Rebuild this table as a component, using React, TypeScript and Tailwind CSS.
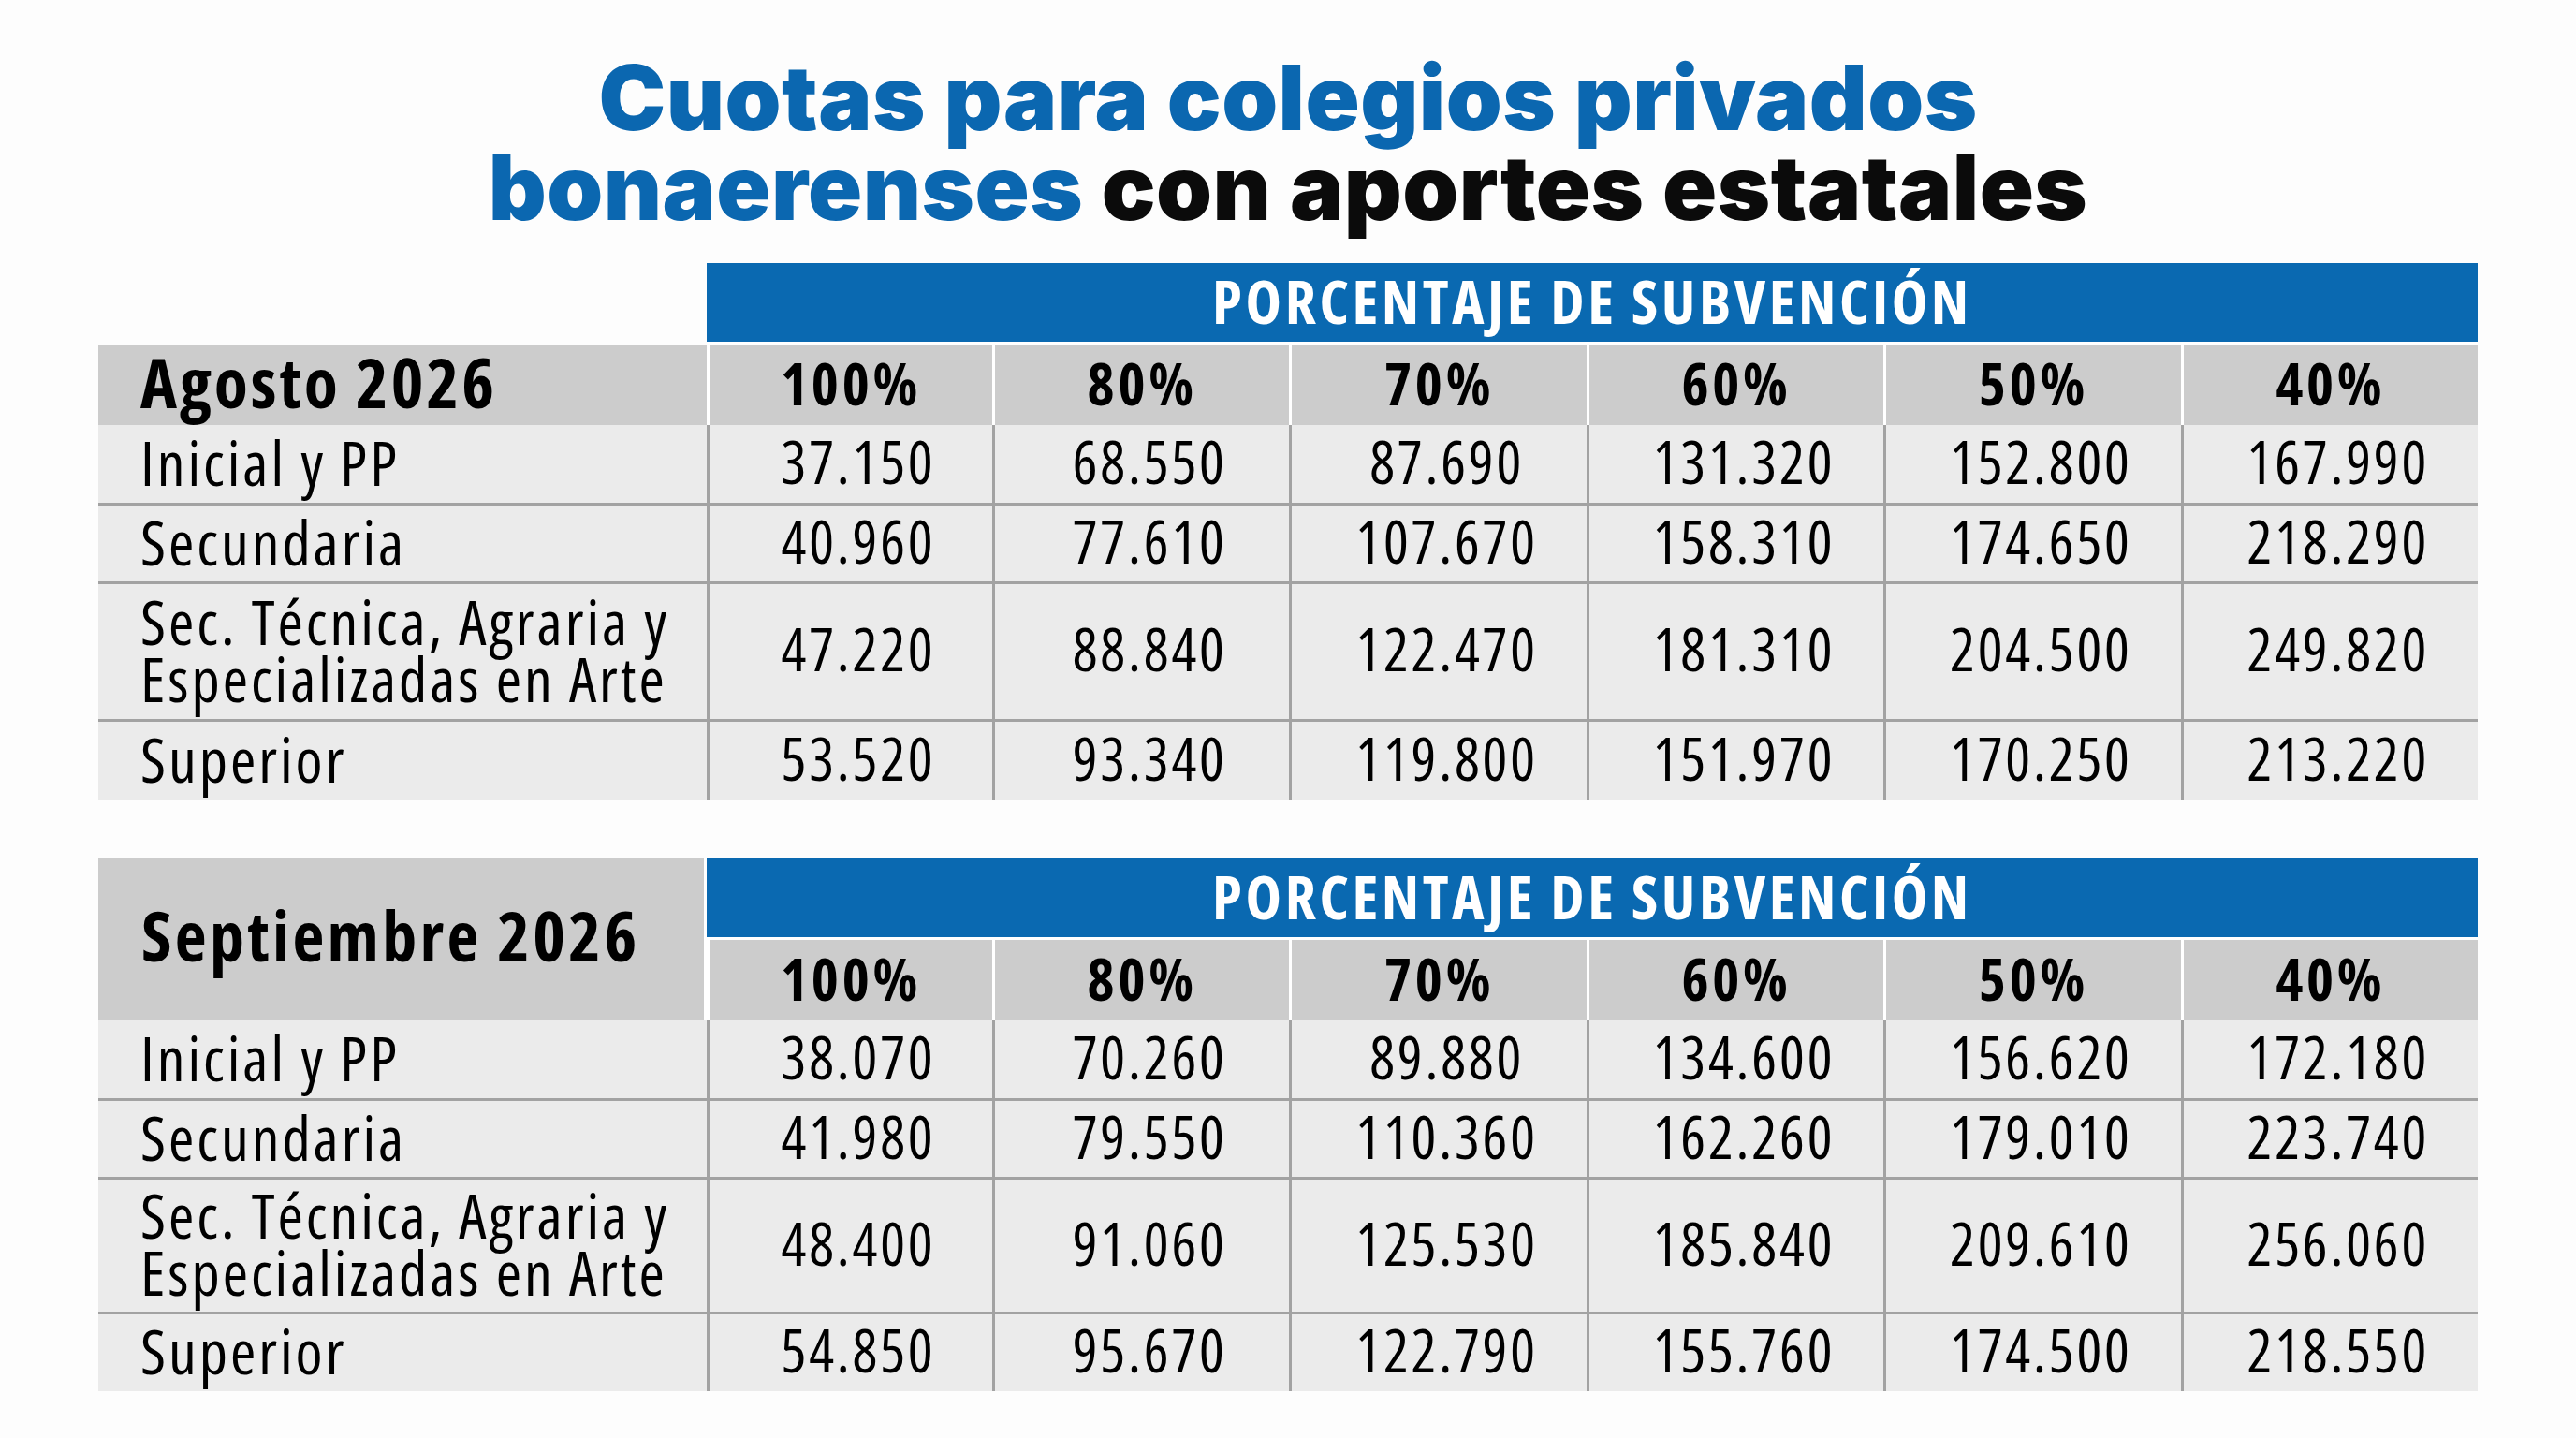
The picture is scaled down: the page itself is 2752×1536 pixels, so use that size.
const PERCENTS = ["100%", "80%", "70%", "60%", "50%", "40%"];

interface Row {
  label: string[];
  values: string[];
  h: string;
}

const AGOSTO: Row[] = [
  { label: ["Inicial y PP"], values: ["37.150", "68.550", "87.690", "131.320", "152.800", "167.990"], h: "h-[83px]" },
  { label: ["Secundaria"], values: ["40.960", "77.610", "107.670", "158.310", "174.650", "218.290"], h: "h-[84px]" },
  {
    label: ["Sec. Técnica, Agraria y", "Especializadas en Arte"],
    values: ["47.220", "88.840", "122.470", "181.310", "204.500", "249.820"],
    h: "h-[147px]",
  },
  { label: ["Superior"], values: ["53.520", "93.340", "119.800", "151.970", "170.250", "213.220"], h: "h-[86px]" },
];

const SEPTIEMBRE: Row[] = [
  { label: ["Inicial y PP"], values: ["38.070", "70.260", "89.880", "134.600", "156.620", "172.180"], h: "h-[83px]" },
  { label: ["Secundaria"], values: ["41.980", "79.550", "110.360", "162.260", "179.010", "223.740"], h: "h-[84px]" },
  {
    label: ["Sec. Técnica, Agraria y", "Especializadas en Arte"],
    values: ["48.400", "91.060", "125.530", "185.840", "209.610", "256.060"],
    h: "h-[144px]",
  },
  { label: ["Superior"], values: ["54.850", "95.670", "122.790", "155.760", "174.500", "218.550"], h: "h-[85px]" },
];

function FeeTable({ month, merged, rows }: { month: string; merged?: boolean; rows: Row[] }) {
  return (
    <div className="mx-auto grid w-[2542px] grid-cols-[650px_305px_repeat(5,minmax(0,1fr))] text-black">
      {merged ? (
        <div className="row-span-2 flex items-center whitespace-nowrap border-r-[3px] border-white bg-[#cccccc] pl-[46px] pb-[10px] text-[74px] font-bold tracking-[0.045em]">
          {month}
        </div>
      ) : (
        <div />
      )}
      <div className="col-span-6 flex h-[87px] items-center justify-center whitespace-nowrap border-b-[3px] border-white bg-[#0a69b1] pb-[2px] text-[65px] font-bold tracking-[0.055em] text-white">
        PORCENTAJE DE SUBVENCIÓN
      </div>

      {!merged && (
        <div className="flex h-[86px] items-center whitespace-nowrap bg-[#cccccc] pl-[45px] pb-[8px] text-[74px] font-bold tracking-[0.04em]">
          {month}
        </div>
      )}
      {PERCENTS.map((p) => (
        <div
          key={p}
          className="flex h-[86px] items-center justify-center border-l-[3px] border-white bg-[#cccccc] pb-[4px] text-[62px] font-bold tracking-[0.06em]"
        >
          {p}
        </div>
      ))}

      {rows.map((row, r) => (
        <div key={row.label[0]} className="contents">
          <div
            className={`flex flex-col justify-center whitespace-nowrap bg-[#ebebeb] pl-[45px] pb-[5px] text-[66px] font-medium leading-[61px] tracking-[0.045em] ${row.h} ${
              r > 0 ? "border-t-[3px] border-[#a2a2a2]" : ""
            }`}
          >
            {row.label.map((l) => (
              <span key={l}>{l}</span>
            ))}
          </div>
          {row.values.map((v, i) => (
            <div
              key={i}
              className={`flex items-center justify-center border-l-[3px] border-[#a2a2a2] bg-[#ebebeb] pl-[16px] pb-[5px] text-[63px] font-medium tracking-[0.045em] ${row.h} ${
                r > 0 ? "border-t-[3px]" : ""
              }`}
            >
              {v}
            </div>
          ))}
        </div>
      ))}
    </div>
  );
}

export default function App() {
  return (
    <div className="h-[1536px] w-[2752px] overflow-hidden bg-[#fdfdfd] font-['Open_Sans','Liberation_Sans',sans-serif] [font-stretch:75%]">
      <h1 className="pt-[56px] text-center font-['Inter',sans-serif] text-[96px] font-black leading-[96px] tracking-[0.005em] text-[#0b67b0] [font-stretch:100%]">
        Cuotas para colegios privados
        <br />
        bonaerenses <span className="text-[#0b0b0b]">con aportes estatales</span>
      </h1>

      <div className="mt-[33px]">
        <FeeTable month="Agosto 2026" rows={AGOSTO} />
      </div>
      <div className="mt-[63px]">
        <FeeTable month="Septiembre 2026" merged rows={SEPTIEMBRE} />
      </div>
    </div>
  );
}
